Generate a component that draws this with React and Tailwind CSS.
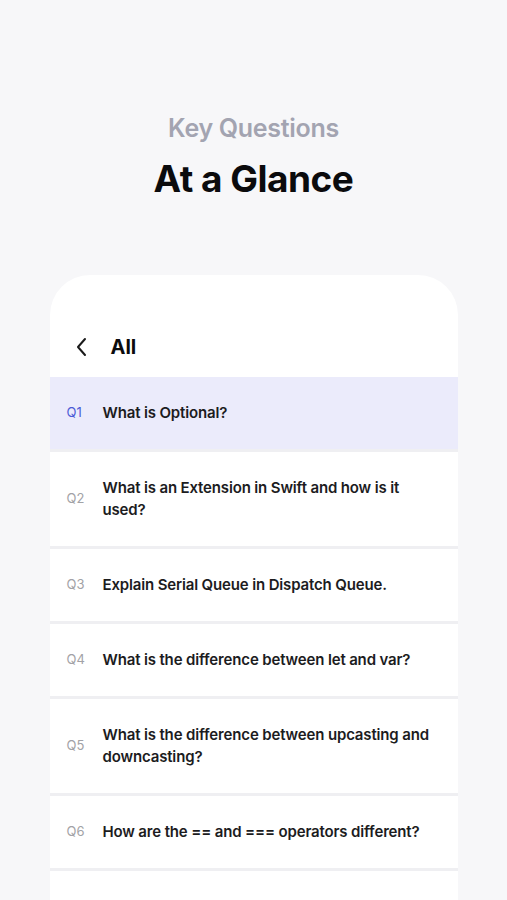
import React from "react";

const questions = [
  { n: "Q1", t: "What is Optional?", active: true },
  { n: "Q2", t: "What is an Extension in Swift and how is it used?" },
  { n: "Q3", t: "Explain Serial Queue in Dispatch Queue." },
  { n: "Q4", t: "What is the difference between let and var?" },
  { n: "Q5", t: "What is the difference between upcasting and downcasting?" },
  { n: "Q6", t: "How are the == and === operators different?" },
  { n: "Q7", t: "" },
];

export default function App() {
  return (
    <div
      className="w-[507px] h-[900px] overflow-hidden bg-[#f7f7f9] flex flex-col items-center"
      style={{ fontFamily: "Inter, 'Noto Sans', sans-serif" }}
    >
      <div className="pt-[113px] text-[25px] leading-[30px] font-semibold text-[#a3a4b1] tracking-[-0.3px]">
        Key Questions
      </div>
      <div className="mt-[13px] text-[37px] leading-[46px] font-bold text-[#0b0b0d] tracking-[-0.5px]">
        At a Glance
      </div>
      <div className="mt-[73px] w-[408px] bg-white rounded-t-[40px] flex flex-col">
        <div className="h-[102px] flex items-end pb-[16px] pl-[25px]">
          <svg width="14" height="22" viewBox="0 0 14 22" className="mb-[3px]">
            <path d="M10 3 L3 11 L10 19" fill="none" stroke="#1a1a1a" strokeWidth="2" strokeLinecap="round" strokeLinejoin="round" />
          </svg>
          <span className="ml-[22px] text-[20px] leading-[28px] font-bold text-[#0b0b0d]">All</span>
        </div>
        <div className="flex flex-col gap-[3px] bg-[#efeff2]">
          {questions.map((q) => (
            <div
              key={q.n}
              className={`flex items-center pl-[17px] pr-[22px] py-[25px] min-h-[72px] ${q.active ? "bg-[#ebebfb]" : "bg-white"}`}
            >
              {q.t && (
                <>
                  <span className={`w-[36px] shrink-0 text-[13px] ${q.active ? "text-[#4b5bd6]" : "text-[#a2a2a6]"}`}>
                    {q.n}
                  </span>
                  <span className="text-[15px] leading-[22px] font-semibold text-[#1c1c1e] tracking-[-0.15px]">
                    {q.t}
                  </span>
                </>
              )}
            </div>
          ))}
        </div>
      </div>
    </div>
  );
}
